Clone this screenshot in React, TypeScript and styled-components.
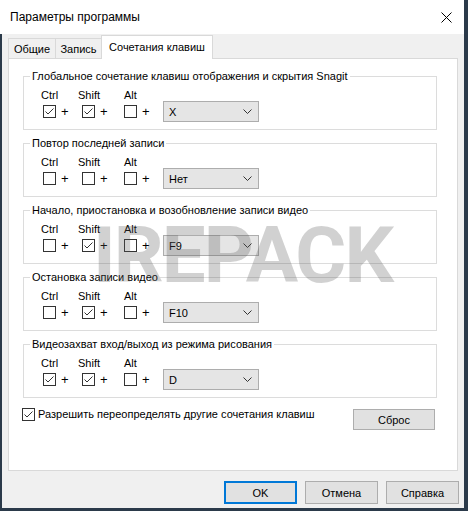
import React from "react";
import styled, { createGlobalStyle } from "styled-components";

const Global = createGlobalStyle`
  html, body { margin: 0; padding: 0; background: #ffffff; }
  body { font-family: "Liberation Sans", Arial, sans-serif; font-size: 11px; color: #000; }
  * { box-sizing: border-box; }
`;

const Window = styled.div`
  position: relative;
  width: 468px;
  height: 511px;
  display: flex;
  flex-direction: column;
  border-right: 4px solid #2b3a4a;
  border-bottom: 3px solid #2b3a4a;
  overflow: hidden;
`;

const TitleBar = styled.div`
  height: 34px;
  flex: none;
  background: #ffffff;
  display: flex;
  align-items: center;
  justify-content: space-between;
  padding-left: 10px;
  padding-right: 6px;
  font-size: 12px;
`;

const CloseBtn = styled.div`
  width: 24px;
  height: 24px;
  display: flex;
  align-items: center;
  justify-content: center;
`;

const Body = styled.div`
  flex: 1;
  display: flex;
  flex-direction: column;
  background: #f0f0f0;
  border-left: 2px solid #2b3a4a;
  padding: 2px 6px 0 6px;
`;

const TabRow = styled.div`
  height: 23px;
  display: flex;
  align-items: flex-end;
  position: relative;
  z-index: 1;
  margin-bottom: -1px;
`;

const Tab = styled.div<{ $active?: boolean; $w: number }>`
  width: ${(p) => p.$w}px;
  height: ${(p) => (p.$active ? 24 : 21)}px;
  margin-left: -1px;
  border: 1px solid #d9d9d9;
  border-bottom: ${(p) => (p.$active ? "none" : "1px solid #d9d9d9")};
  background: ${(p) => (p.$active ? "#ffffff" : "#f0f0f0")};
  display: flex;
  align-items: center;
  justify-content: center;
  padding-bottom: ${(p) => (p.$active ? 2 : 0)}px;
  white-space: nowrap;
  &:first-child { margin-left: 0; }
`;

const Panel = styled.div`
  height: 413px;
  background: #ffffff;
  border: 1px solid #d9d9d9;
  padding: 17px 20px 0 14px;
  display: flex;
  flex-direction: column;
  gap: 13px;
`;

const Group = styled.div`
  border: 1px solid #dcdcdc;
  padding: 0 0 7px 6px;
`;

const Legend = styled.div`
  margin-top: -9px;
  width: fit-content;
  padding: 0 2px;
  line-height: 16px;
  background: #ffffff;
  white-space: nowrap;
`;

const Keys = styled.div`
  margin: 5px 0 0 13px;
  display: grid;
  grid-template-columns: 39px 42px 39px 96px;
  grid-template-rows: 12px 21px;
  align-items: center;
`;

const KeyLabel = styled.div<{ $shift: number }>`
  grid-row: 1;
  line-height: 12px;
  margin-left: ${(p) => p.$shift}px;
`;

const KeyCell = styled.div`
  grid-row: 2;
  display: flex;
  align-items: center;
  gap: 5px;
`;

const Plus = styled.span`
  font-size: 13px;
  line-height: 13px;
`;

const Box = styled.span`
  width: 13px;
  height: 13px;
  flex: none;
  border: 1px solid #333333;
  background: #ffffff;
  display: inline-flex;
`;

const Combo = styled.div`
  grid-row: 2;
  grid-column: 4;
  height: 21px;
  width: 96px;
  background: #e5e5e5;
  border: 1px solid #adadad;
  display: flex;
  align-items: center;
  justify-content: space-between;
  padding: 0 6px 0 5px;
`;

const BottomRow = styled.div`
  margin-top: -3px;
  display: flex;
  justify-content: space-between;
  align-items: flex-start;
`;

const AllowLine = styled.div`
  display: flex;
  align-items: center;
  gap: 3px;
  margin-left: -1px;
  line-height: 13px;
  white-space: nowrap;
`;

const Button = styled.div<{ $default?: boolean; $w: number; $h: number }>`
  width: ${(p) => p.$w}px;
  height: ${(p) => p.$h}px;
  background: #e1e1e1;
  border: ${(p) => (p.$default ? "2px solid #0078d7" : "1px solid #adadad")};
  display: flex;
  align-items: center;
  justify-content: center;
`;

const ResetButton = styled(Button)`
  margin-top: 1px;
  margin-right: 2px;
`;

const Footer = styled.div`
  display: flex;
  justify-content: flex-end;
  gap: 8px;
  padding-top: 10px;
  margin-right: -1px;
`;

const Watermark = styled.div`
  position: absolute;
  left: 93px;
  top: 210px;
  font-family: Roboto, "Liberation Sans", sans-serif;
  font-weight: 700;
  font-size: 78px;
  letter-spacing: -2px;
  color: rgba(90, 90, 90, 0.28);
  pointer-events: none;
  white-space: nowrap;
`;

const Check = ({ on }: { on: boolean }) => (
  <Box>
    {on && (
      <svg width="11" height="11" viewBox="0 0 11 11">
        <path d="M1.5 5.5 L4 8 L9.5 2.5" fill="none" stroke="#333" strokeWidth="1" />
      </svg>
    )}
  </Box>
);

const Chevron = () => (
  <svg width="9" height="5" viewBox="0 0 9 5">
    <path d="M0.5 0.5 L4.5 4.5 L8.5 0.5" fill="none" stroke="#333" strokeWidth="1" />
  </svg>
);

type Shortcut = { title: string; ctrl: boolean; shift: boolean; alt: boolean; key: string };

const shortcuts: Shortcut[] = [
  { title: "Глобальное сочетание клавиш отображения и скрытия Snagit", ctrl: true, shift: true, alt: false, key: "X" },
  { title: "Повтор последней записи", ctrl: false, shift: false, alt: false, key: "Нет" },
  { title: "Начало, приостановка и возобновление записи видео", ctrl: false, shift: true, alt: false, key: "F9" },
  { title: "Остановка записи видео", ctrl: false, shift: true, alt: false, key: "F10" },
  { title: "Видеозахват вход/выход из режима рисования", ctrl: true, shift: true, alt: false, key: "D" },
];

export default function App() {
  return (
    <>
      <Global />
      <Window>
        <TitleBar>
          <span>Параметры программы</span>
          <CloseBtn>
            <svg width="11" height="11" viewBox="0 0 11 11">
              <path d="M0.5 0.5 L10.5 10.5 M10.5 0.5 L0.5 10.5" stroke="#000" strokeWidth="1" />
            </svg>
          </CloseBtn>
        </TitleBar>
        <Body>
          <TabRow>
            <Tab $w={48}>Общие</Tab>
            <Tab $w={47}>Запись</Tab>
            <Tab $w={112} $active>Сочетания клавиш</Tab>
          </TabRow>
          <Panel>
            {shortcuts.map((s) => (
              <Group key={s.title}>
                <Legend>{s.title}</Legend>
                <Keys>
                  <KeyLabel $shift={-2}>Ctrl</KeyLabel>
                  <KeyLabel $shift={-4}>Shift</KeyLabel>
                  <KeyLabel $shift={0}>Alt</KeyLabel>
                  <KeyCell>
                    <Check on={s.ctrl} />
                    <Plus>+</Plus>
                  </KeyCell>
                  <KeyCell>
                    <Check on={s.shift} />
                    <Plus>+</Plus>
                  </KeyCell>
                  <KeyCell>
                    <Check on={s.alt} />
                    <Plus>+</Plus>
                  </KeyCell>
                  <Combo>
                    <span>{s.key}</span>
                    <Chevron />
                  </Combo>
                </Keys>
              </Group>
            ))}
            <BottomRow>
              <AllowLine>
                <Check on={true} />
                <span>Разрешить переопределять другие сочетания клавиш</span>
              </AllowLine>
              <ResetButton $w={82} $h={21}>Сброс</ResetButton>
            </BottomRow>
          </Panel>
          <Footer>
            <Button $default $w={73} $h={23}>OK</Button>
            <Button $w={73} $h={23}>Отмена</Button>
            <Button $w={73} $h={23}>Справка</Button>
          </Footer>
        </Body>
        <Watermark>IREPACK</Watermark>
      </Window>
    </>
  );
}
